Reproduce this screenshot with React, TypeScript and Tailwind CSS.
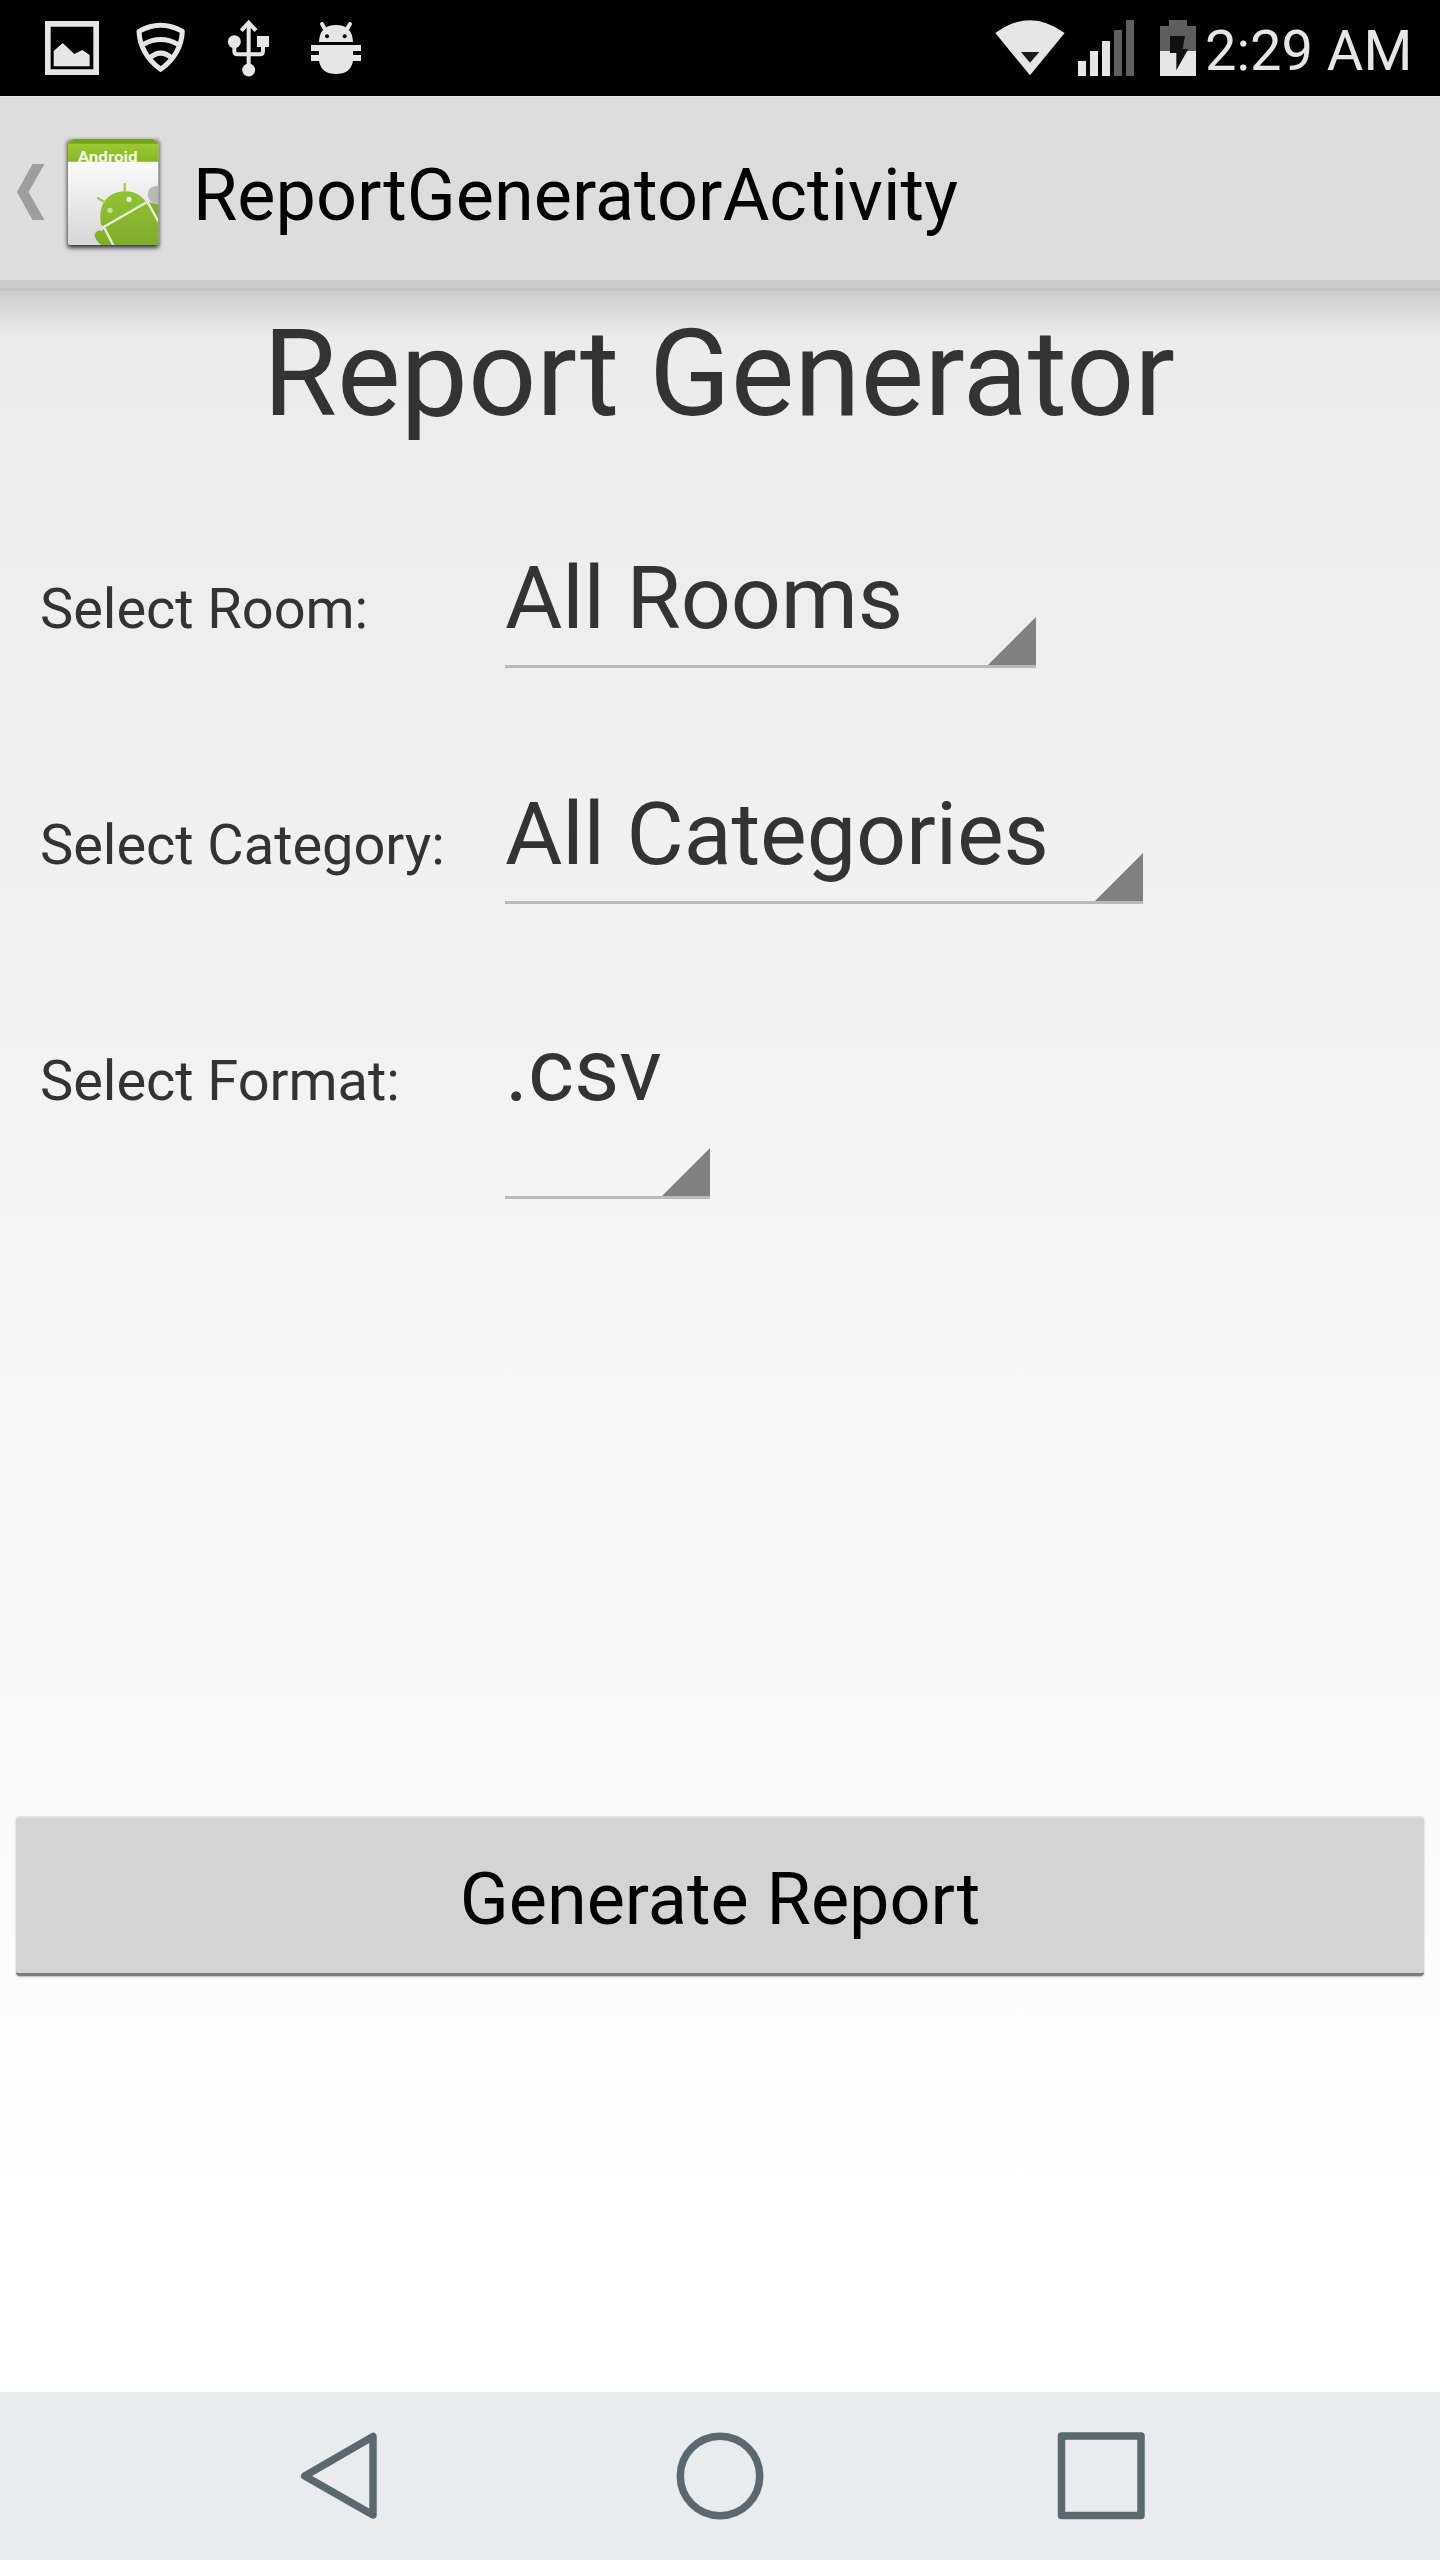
import React from "react";

function StatusBar() {
  return (
    <header className="flex h-24 items-center bg-black">
      <svg width="400" height="96" viewBox="0 0 1200 288" fill="#e6e6e6">
        <path fillRule="evenodd" d="M135 63h162v162H135zM152 80v128h128V80z" />
        <path d="M161 199v-46l27-24 35 33 24-12 22 15v34z" />
        <g fill="none" stroke="#e6e6e6" strokeWidth="15" strokeLinejoin="round">
          <path d="M417 94Q482 58 547 94Q544 162 482 208Q420 162 417 94Z" />
          <path d="M430 133Q482 104 534 133M450 173Q482 146 514 173" />
        </g>
        <g>
          <circle cx="703" cy="125" r="19.500" />
          <circle cx="746" cy="210" r="19.500" />
          <path d="M771 108h36v33h-36z" />
          <path d="M703 135v19q0 9 9 9h69q8 0 8-9v-19M746 66v140M724 92l22-24 22 24" fill="none" stroke="#e6e6e6" strokeWidth="12" />
        </g>
        <path d="M957 126q2-51 51-51t51 51zM933 135h150v18h-24v12h24v18h-24q-7 39-51 39t-51-39h-24v-18h24v-12h-24z" />
        <path d="M966 72l12 20M1050 72l-12 20" stroke="#e6e6e6" strokeWidth="12" strokeLinecap="round" />
        <circle cx="981" cy="109" r="6" fill="#000" />
        <circle cx="1034" cy="109" r="6" fill="#000" />
      </svg>
      <svg className="ml-[580px] shrink-0" width="226" height="96" viewBox="0 0 678 288" fill="#e6e6e6">
        <path d="M46 99Q150 22 254 99L150 226Z" />
        <path d="M123 156h55l-28 32z" fill="#1a1a1a" />
        <path d="M294 183h24v45h-24zM330 153h24v75h-24zM366 123h24v105h-24z" />
        <path d="M402 90h24v138h-24zM438 60h24v168h-24z" fill="#5e5e5e" />
        <path d="M567 60h54v18h27v75H540V78h27z" fill="#5e5e5e" />
        <path d="M540 153h108v75H540z" />
        <path d="M570 108h45l-7 39h17l-36 64v-52h-19z" fill="#111" />
      </svg>
      <span className="-ml-[1px] mt-[5px] text-[56px] leading-[66px] whitespace-nowrap text-[#e6e6e6]">2:29 AM</span>
    </header>
  );
}

function AppIcon() {
  return (
    <svg className="mt-3 ml-[15px] shrink-0" width="104" height="125" viewBox="180 126 312 375">
      <defs>
        <linearGradient id="paper" x1="0" y1="0" x2="0" y2="1">
          <stop offset="0.2" stopColor="#fcfcfc" />
          <stop offset="1" stopColor="#d6d6d6" />
        </linearGradient>
        <linearGradient id="band" x1="0" y1="0" x2="0" y2="1">
          <stop offset="0" stopColor="#a2d036" />
          <stop offset="1" stopColor="#86b626" />
        </linearGradient>
        <linearGradient id="robot" x1="0" y1="0" x2="0" y2="1">
          <stop offset="0" stopColor="#92c336" />
          <stop offset="1" stopColor="#80ab2b" />
        </linearGradient>
        <filter id="shade" x="-20%" y="-20%" width="140%" height="140%">
          <feGaussianBlur stdDeviation="7" />
        </filter>
        <clipPath id="sheet">
          <path d="M204 215h271v244q0 6-6 6H210q-6 0-6-6z" />
        </clipPath>
      </defs>
      <rect x="202" y="152" width="275" height="322" rx="8" fill="#000" opacity="0.75" filter="url(#shade)" />
      <path d="M204 161L220 147H459L475 161V459q0 6-6 6H210q-6 0-6-6z" fill="url(#paper)" />
      <path d="M204 215V159l16-12h239l16 12v56z" fill="url(#band)" />
      <path d="M204 161l16-14h239l16 14z" fill="#75a321" />
      <text x="233" y="216" textLength="180" lengthAdjust="spacingAndGlyphs" fontSize="46" fontWeight="700" fill="#f3f9e2">Android</text>
      <g clipPath="url(#sheet)">
        <circle cx="470" cy="314" r="27" fill="#b8b8b8" />
        <path d="M442 334q18 10 36 8v60z" fill="#7fae30" />
        <path d="M303 404C292 338 328 304 376 304C404 304 426 318 438 336L476 398V466H304Q284 448 284 436Q286 418 308 422L314 410Z" fill="url(#robot)" />
        <path d="M374 304v-22M315 337l-21-12" stroke="#9fcb52" strokeWidth="7" strokeLinecap="round" />
        <path d="M311 411L440 337M312 412l28 54M442 334l34 62" fill="none" stroke="#e5efd2" strokeWidth="7" />
        <circle cx="330" cy="361" r="8" fill="#c8e09a" />
        <circle cx="387" cy="328" r="8" fill="#e5efd2" />
      </g>
    </svg>
  );
}

function Spinner({ value, widthClass, heightClass }: { value: string; widthClass: string; heightClass: string }) {
  return (
    <button className={"relative flex items-start border-b-[3px] border-[#bababa] text-left " + widthClass + " " + heightClass}>
      <span className="block text-[88px] leading-[106px] tracking-[-0.12px] whitespace-nowrap">{value}</span>
      <svg className="absolute right-0 bottom-0" width="48" height="48" viewBox="0 0 48 48">
        <path d="M48 0v48H0z" fill="#808080" />
      </svg>
    </button>
  );
}

function Row({ label, children, className }: { label: string; children: React.ReactNode; className: string }) {
  return (
    <div className={"flex items-start pl-10 " + className}>
      <span className="mt-[31px] w-[465px] shrink-0 text-[56px] leading-[66px] tracking-[-0.06px] whitespace-nowrap">{label}</span>
      {children}
    </div>
  );
}

export default function App() {
  return (
    <div className="flex h-[2560px] w-[1440px] flex-col overflow-hidden font-['Roboto',sans-serif] text-[#333]">
      <StatusBar />
      <div className="flex min-h-0 flex-1 flex-col bg-linear-to-b from-[#e9e9e9] to-white to-95%">
        <div className="flex h-[184px] shrink-0 items-center border-t border-[#e8e4e8] bg-[#ddd] pl-[17px]">
          <svg className="mt-[7px] shrink-0" width="28" height="56" viewBox="0 0 28 56">
            <path d="M15.500 0H27.500L11.500 28l16 28H15.500L0 28z" fill="#9e9e9e" />
          </svg>
          <AppIcon />
          <h1 className="mt-[14px] ml-[29px] text-[72px] leading-[84px] text-black">ReportGeneratorActivity</h1>
        </div>
        <div className="h-2 shrink-0 bg-[#cccccc]" />
        <div className="h-[3px] shrink-0 bg-[#c4c4c4]" />
        <div className="h-[45px] shrink-0 bg-linear-to-b from-black/13 to-transparent" />
        <main className="flex flex-1 flex-col">
          <h2 className="-mt-8 pr-0.5 text-center text-[120px] leading-[140px]">Report Generator</h2>
          <Row label="Select Room:" className="mt-[101px] h-[236px]">
            <Spinner value="All Rooms" widthClass="w-[531px]" heightClass="h-[123px]" />
          </Row>
          <Row label="Select Category:" className="h-[236px]">
            <Spinner value="All Categories" widthClass="w-[638px]" heightClass="h-[123px]" />
          </Row>
          <Row label="Select Format:" className="h-[236px]">
            <Spinner value=".csv" widthClass="w-[205px]" heightClass="h-[182px]" />
          </Row>
          <button className="mx-4 mt-[563px] h-[160px] rounded-[4px] border-t-2 border-b-[3px] border-t-[#e2e2e2] border-b-[#7c7c7c] bg-[#d4d4d4] pt-[9px] text-[72px] leading-[84px] text-black shadow-[0_1px_2px_rgba(0,0,0,0.25)]">
            Generate Report
          </button>
        </main>
      </div>
      <nav className="flex h-[168px] shrink-0 items-center bg-[#e9ebee]">
        <svg width="1440" height="168" viewBox="0 0 1440 168" fill="none" stroke="#5b6870" strokeWidth="7.500" strokeLinejoin="round">
          <path d="M304.700 84L373 44.500V123Z" />
          <circle cx="720" cy="84" r="39.700" />
          <rect x="1061.500" y="44" width="79.500" height="79.500" />
        </svg>
      </nav>
    </div>
  );
}
